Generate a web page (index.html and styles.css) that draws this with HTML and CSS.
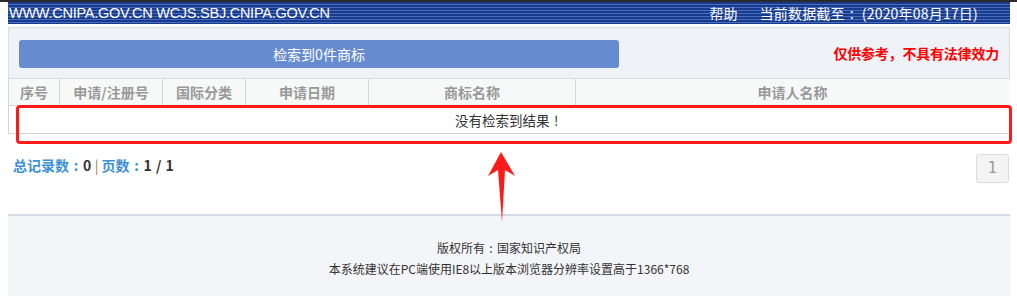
FILE: index.html
```html
<!DOCTYPE html>
<html lang="zh-CN">
<head>
<meta charset="utf-8">
<title>商标检索</title>
<link rel="stylesheet" href="styles.css">
</head>
<body>
<div class="topbar"></div>
<div class="page">
  <div class="header">
    <div class="site">WWW.CNIPA.GOV.CN WCJS.SBJ.CNIPA.GOV.CN</div>
    <div class="hright">
      <span class="help">帮助</span>
      <span class="date">当前数据截至<span class="punct">:</span>(2020年08月17日)</span>
    </div>
  </div>
  <div class="panel">
    <div class="btn">检索到0件商标</div>
    <div class="notice">仅供参考，不具有法律效力</div>
  </div>
  <div class="tablewrap">
    <table class="grid">
      <thead>
        <tr>
          <th class="c1">序号</th>
          <th class="c2">申请/注册号</th>
          <th class="c3">国际分类</th>
          <th class="c4">申请日期</th>
          <th class="c5">商标名称</th>
          <th class="c6">申请人名称</th>
        </tr>
      </thead>
      <tbody>
        <tr><td colspan="6" class="empty">没有检索到结果<span class="punct">!</span></td></tr>
      </tbody>
    </table>
    <div class="highlight"></div>
    <svg class="arrow" width="30" height="72" viewBox="0 0 30 72">
      <polygon points="14,0 28,24 18,18 15,70 11,18 1,24" fill="#ff1a1a"/>
    </svg>
  </div>
  <div class="stats">
    <div class="count"><span class="lbl">总记录数<span class="punct">:</span></span><b>0</b><span class="sep">|</span><span class="lbl">页数<span class="punct">:</span></span><b>1 / 1</b></div>
    <div class="pager">1</div>
  </div>
  <div class="footer">
    <p>版权所有<span class="punct">:</span>国家知识产权局</p>
    <p>本系统建议在PC端使用IE8以上版本浏览器分辨率设置高于1366*768</p>
  </div>
</div>
</body>
</html>
```
FILE: styles.css
```css
html, body {
  margin: 0;
  padding: 0;
  background: #fff;
}
body {
  font-family: "Liberation Sans", "Noto Sans CJK SC", sans-serif;
  color: #333;
}
.punct {
  display: inline-block;
  width: 1em;
  text-align: center;
}
.topbar {
  height: 2px;
  background: #2a2a2a;
}
.page {
  width: 1002px;
  margin-left: 8px;
}
.header {
  height: 22px;
  background: repeating-linear-gradient(to bottom, #163a8e 0px, #163a8e 2px, #4d6db8 2px, #4d6db8 3px);
  display: flex;
  align-items: center;
  justify-content: space-between;
  color: #fff;
  font-size: 14.5px;
}
.site {
  padding-left: 1px;
  letter-spacing: -0.25px;
}
.hright {
  display: flex;
  gap: 22px;
  padding-right: 32px;
  font-family: "Noto Sans CJK SC", sans-serif;
  font-size: 14px;
}
.date {
  letter-spacing: 0.2px;
}
.date .punct {
  margin-right: 3px;
}
.panel {
  margin-top: 3px;
  height: 50px;
  border: 1px solid #d9dde2;
  background: #eff3f8;
  display: flex;
  align-items: center;
  justify-content: space-between;
  padding: 0 10px;
  box-sizing: content-box;
  width: 980px;
}
.btn {
  width: 600px;
  height: 28px;
  line-height: 28px;
  border-radius: 3px;
  background: #668bcf;
  color: #fff;
  text-align: center;
  font-family: "Noto Sans CJK SC", sans-serif;
  font-size: 14px;
  margin-top: 1px;
}
.notice {
  color: #f00;
  font-weight: bold;
  font-family: "Noto Sans CJK SC", sans-serif;
  font-size: 14px;
  letter-spacing: -0.2px;
}
.tablewrap {
  position: relative;
}
.grid {
  width: 1001px;
  border-collapse: collapse;
  font-family: "Noto Sans CJK SC", sans-serif;
  font-size: 14px;
}
.grid th {
  height: 26px;
  padding: 0;
  background: #f7f8f8;
  color: #999;
  font-weight: bold;
  border: 1px solid #d6d6d6;
  border-top: none;
}
.grid th:last-child { border-right: none; }
.c1 { width: 50px; }
.c2 { width: 102px; }
.c3 { width: 82px; }
.c4 { width: 122px; }
.c5 { width: 206px; }
.grid td.empty {
  height: 27px;
  padding: 0;
  text-align: center;
  color: #333;
  font-size: 13.5px;
  border-left: 1px solid #d6d6d6;
  border-bottom: 1px solid #d6d6d6;
}
.highlight {
  position: absolute;
  left: 8px;
  top: 26px;
  width: 990px;
  height: 33px;
  border: 3px solid #ff1a1a;
  border-radius: 4px;
}
.arrow {
  position: absolute;
  left: 479px;
  top: 73px;
}
.stats {
  display: flex;
  justify-content: space-between;
  align-items: flex-start;
  padding-top: 20px;
  padding-left: 5px;
  height: 60px;
  box-sizing: border-box;
}
.count {
  font-family: "Noto Sans CJK SC", sans-serif;
  font-size: 14px;
  margin-top: 1px;
}
.count .lbl {
  color: #3d8fd6;
  font-weight: bold;
}
.count b {
  color: #333;
  letter-spacing: 0.5px;
}
.count .sep {
  color: #b07a3a;
  margin: 0 3px;
}
.pager {
  width: 31px;
  height: 27px;
  line-height: 27px;
  border: 1px solid #dcdcdc;
  border-radius: 3px;
  background: #f4f4f4;
  color: #999;
  text-align: center;
  font-size: 15px;
  font-family: "DejaVu Sans", sans-serif;
  margin-right: 1px;
}
.footer {
  margin-top: 20px;
  border-top: 2px solid #d5d9e8;
  background: #f4f5f8;
  height: 82px;
  box-sizing: border-box;
  padding-top: 21px;
  text-align: center;
  font-family: "Noto Sans CJK SC", sans-serif;
  font-size: 12px;
  color: #333;
}
.footer p {
  margin: 0;
  line-height: 21px;
}
```
